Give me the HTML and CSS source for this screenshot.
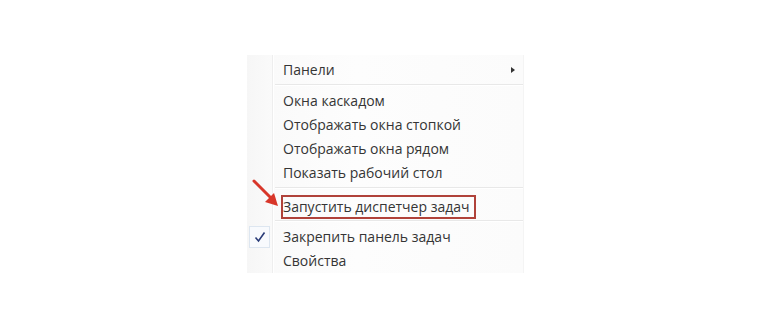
FILE: index.html
```html
<!DOCTYPE html>
<html lang="ru">
<head>
    <meta charset="UTF-8">
    <title>Контекстное меню панели задач</title>
    <link rel="stylesheet" href="styles.css">
</head>
<body>
    <div class="menu">
        <div class="item sub">Панели <span class="caret"></span></div>
        <div class="sep"></div>
        <div class="item">Окна каскадом</div>
        <div class="item">Отображать окна стопкой</div>
        <div class="item">Отображать окна рядом</div>
        <div class="item">Показать рабочий стол</div>
        <div class="sep"></div>
        <div class="item marked">
            <svg class="arrow" width="32" height="32" viewBox="0 0 32 32">
                <line x1="3" y1="2" x2="22" y2="21" stroke="#d8362a" stroke-width="3" stroke-linecap="round"/>
                <polygon points="27,27 14,23 23,14" fill="#d8362a"/>
            </svg>
            <span class="box">Запустить диспетчер задач</span>
        </div>
        <div class="sep after"></div>
        <div class="item checked">
            <span class="check">
                <svg width="12" height="12" viewBox="0 0 12 12"><path d="M1.5 6.5 L4.5 10 L10.5 1.5" fill="none" stroke="#2a3c78" stroke-width="1.6"/></svg>
            </span>
            Закрепить панель задач
        </div>
        <div class="item">Свойства</div>
    </div>
</body>
</html>
```

FILE: styles.css
```css
body {
    margin: 0;
    background: #ffffff;
    font-family: "Open Sans", "Noto Sans", sans-serif;
}

.menu {
    width: 276px;
    margin: 55px 0 0 247px;
    padding: 3px 0 0;
    background: linear-gradient(90deg, #f6f6f6 0, #fafafa 26px, #fdfdfd 40%, #fbfbfb 100%);
    border-right: 1px solid #f4f4f4;
    position: relative;
}

/* gutter line */
.menu::before {
    content: "";
    position: absolute;
    left: 25px;
    top: 0;
    bottom: 0;
    width: 1px;
    background: #eeeeee;
    border-right: 1px solid #ffffff;
}

.item {
    height: 24px;
    line-height: 24px;
    padding-left: 36px;
    font-size: 14px;
    color: #353535;
    position: relative;
}

.sub .caret {
    position: absolute;
    right: 8px;
    top: 9px;
    border-left: 4px solid #333;
    border-top: 3.5px solid transparent;
    border-bottom: 3.5px solid transparent;
}

.sep {
    height: 1px;
    margin: 2px 0 3px 28px;
    background: #e8e8e8;
    border-bottom: 1px solid #ffffff;
}

.sep.after {
    margin-top: 1px;
}

.marked {
    height: 27px;
    display: flex;
    align-items: flex-end;
}

.box {
    margin-left: -2px;
    padding: 0 4px 0 0;
    border: 2px solid #b0423a;
    line-height: 20px;
    height: 20px;
}

.arrow {
    position: absolute;
    left: 4px;
    top: -13px;
}

.check {
    position: absolute;
    left: 2px;
    top: 1px;
    width: 19px;
    height: 20px;
    border: 1px solid #dde6f0;
    background: #f8fafd;
    display: flex;
    align-items: center;
    justify-content: center;
}
```
